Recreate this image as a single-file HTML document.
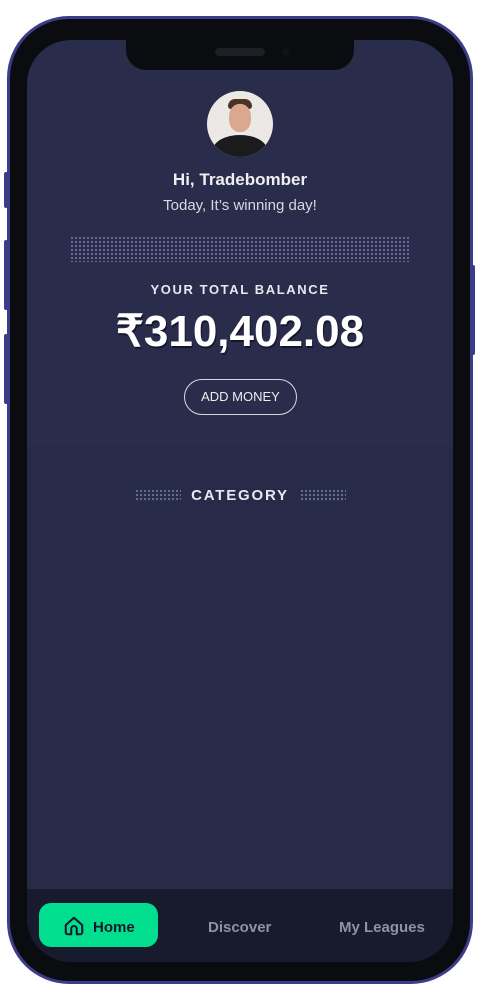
<!DOCTYPE html>
<html><head><meta charset="utf-8"><style>
*{margin:0;padding:0;box-sizing:border-box}
body{width:479px;height:1001px;background:#fff;position:relative;overflow:hidden;font-family:"Liberation Sans",sans-serif}
.rim{position:absolute;left:7px;top:16px;width:466px;height:968px;border-radius:62px;background:#3b3d8a;}
.bez{position:absolute;left:10px;top:19px;width:460px;height:962px;border-radius:59px;background:#0b0c0f;}
.scr{position:absolute;left:27px;top:40px;width:426px;height:922px;border-radius:44px;background:#2a2c4c;overflow:hidden}
.low{position:absolute;left:0;top:405px;width:426px;height:444px;background:#282a49}
.nav{position:absolute;left:0;top:849px;width:426px;height:73px;background:#181a2e}
.notch{position:absolute;left:126px;top:40px;width:228px;height:30px;background:#0b0c0f;border-radius:0 0 20px 20px}
.spk{position:absolute;left:215px;top:48px;width:50px;height:8px;border-radius:4px;background:#1e2026}
.cam{position:absolute;left:282px;top:48px;width:8px;height:8px;border-radius:50%;background:#111}
.t{position:absolute;left:27px;width:426px;text-align:center;color:#fff}
.dots{position:absolute;background-image:radial-gradient(circle,#6a6d98 1px,transparent 1.3px);background-size:4px 4px}
.btn{position:absolute;width:4px;background:#3b3d8a;border-radius:2px}
</style></head><body>
<div class="btn" style="left:4px;top:172px;height:36px"></div>
<div class="btn" style="left:4px;top:240px;height:70px"></div>
<div class="btn" style="left:4px;top:334px;height:70px"></div>
<div class="btn" style="left:471px;top:265px;height:90px"></div>
<div class="rim"></div><div class="bez"></div>
<div class="scr"><div class="low"></div><div class="nav"></div>
<div style="position:absolute;left:12px;top:863px;width:119px;height:44px;border-radius:12px;background:#00de8e"></div>
</div>
<div class="notch"></div><div class="spk"></div><div class="cam"></div>
<div style="position:absolute;left:207px;top:91px;width:66px;height:66px;border-radius:50%;background:#ece8e6;overflow:hidden">
<div style="position:absolute;left:21px;top:8px;width:24px;height:10px;border-radius:10px 10px 4px 4px;background:#4a3426"></div>
<div style="position:absolute;left:22px;top:13px;width:22px;height:28px;border-radius:45%;background:#d9a88f"></div>
<div style="position:absolute;left:6px;top:44px;width:54px;height:30px;border-radius:50% 50% 0 0;background:#1b1a1c"></div>
</div>
<div class="t" style="top:170px;font-size:17px;font-weight:bold;color:#eeeef2">Hi, Tradebomber</div>
<div class="t" style="top:197px;font-size:15px;color:#d8d8e0">Today, It’s winning day!</div>
<div class="dots" style="left:70px;top:236px;width:340px;height:26px"></div>
<div class="t" style="top:282px;font-size:13px;font-weight:bold;letter-spacing:1.6px;color:#e8e8ee">YOUR TOTAL BALANCE</div>
<div class="t" style="top:306px;font-size:44px;font-weight:bold;color:#fff;text-shadow:1px 2px 0 #15162a">₹310,402.08</div>
<div style="position:absolute;left:184px;top:379px;width:113px;height:36px;border:1.5px solid #d8d8e0;border-radius:18px;color:#eee;font-size:13px;text-align:center;line-height:33px">ADD MONEY</div>
<div class="dots" style="left:135px;top:489px;width:46px;height:13px"></div>
<div class="dots" style="left:300px;top:489px;width:46px;height:13px"></div>
<div class="t" style="top:487px;font-size:15px;font-weight:bold;letter-spacing:1.8px;color:#e8e8ee">CATEGORY</div>
<svg style="position:absolute;left:63px;top:915px" width="22" height="22" viewBox="0 0 24 24" fill="none" stroke="#14192a" stroke-width="2.2" stroke-linejoin="round"><path d="M3 11 L12 3 L21 11 V19 a2 2 0 0 1-2 2 H15 V15 a3 3 0 0 0-6 0 V21 H5 a2 2 0 0 1-2-2 Z"/></svg>
<div style="position:absolute;left:93px;top:919px;font-size:15px;font-weight:bold;color:#14192a">Home</div>
<div style="position:absolute;left:208px;top:919px;font-size:15px;font-weight:bold;color:#8f91a4">Discover</div>
<div style="position:absolute;left:339px;top:919px;font-size:15px;font-weight:bold;color:#8f91a4">My Leagues</div>
</body></html>
